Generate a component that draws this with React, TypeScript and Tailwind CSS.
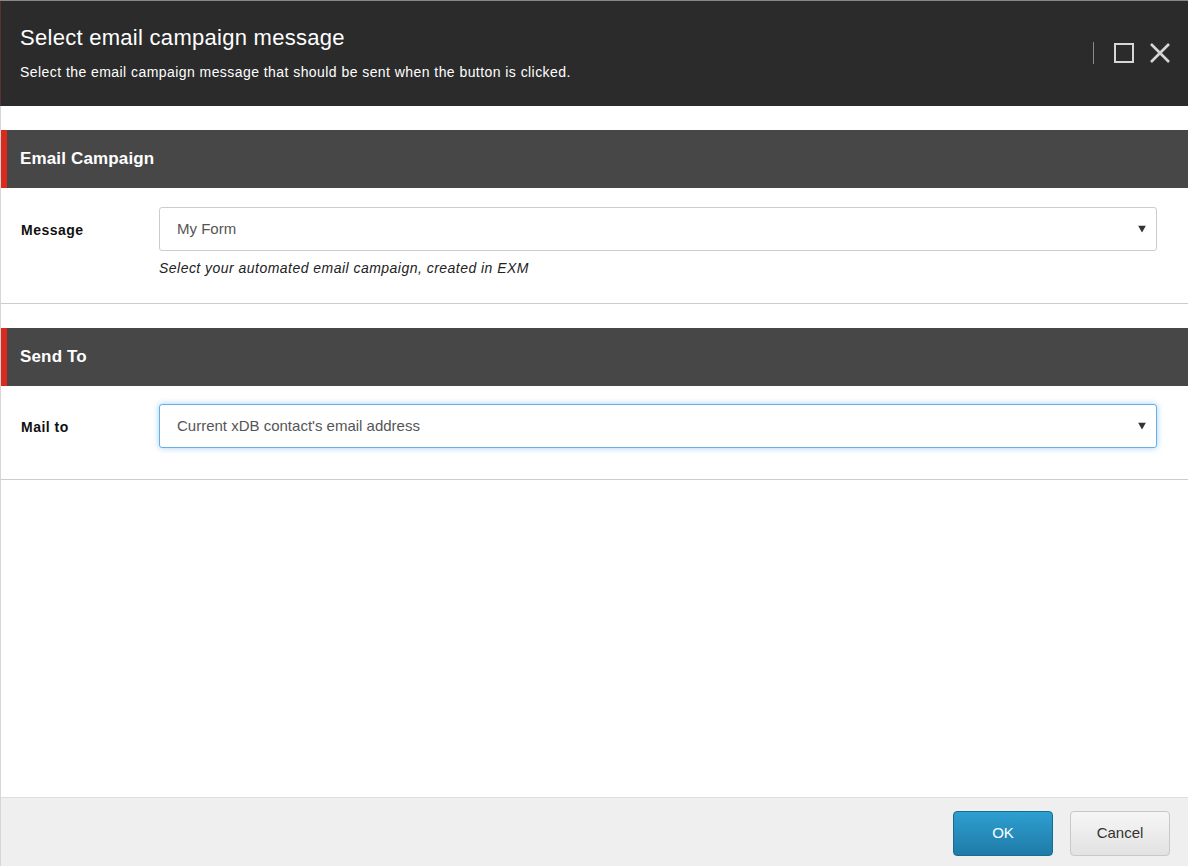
import React from "react";

function Caret() {
  return (
    <svg width="8" height="7" viewBox="0 0 8 7" className="absolute right-[10px] top-1/2 -translate-y-1/2">
      <path d="M0 0 H8 L4 7 Z" fill="#333" />
    </svg>
  );
}

function Section({
  title,
  label,
  value,
  help,
  focused,
}: {
  title: string;
  label: string;
  value: string;
  help?: string;
  focused?: boolean;
}) {
  return (
    <div className="mt-[24px]">
      <div className="h-[58px] bg-[#474747] flex items-center border-l-[6px] border-[#dc291e] pl-[13px]">
        <span className="text-white font-bold text-[17px] tracking-[0.15px]">{title}</span>
      </div>
      <div className={`border-b border-[#cccccc] ${help ? "pt-[19px] pb-[26px]" : "pt-[18px] pb-[31px]"}`}>
        <div className="flex items-center">
          <div className="w-[158px] pl-[20px] pt-[2px] text-[14px] font-bold text-[#111] tracking-[0.5px]">{label}</div>
          <div
            className={`relative flex-1 mr-[31px] h-[44px] rounded-[3px] border bg-white flex items-center pl-[17px] text-[15px] text-[#555] ${
              focused
                ? "border-[#66afe9] shadow-[0_0_6px_rgba(102,175,233,0.6)]"
                : "border-[#cccccc]"
            }`}
          >
            {value}
            <Caret />
          </div>
        </div>
        {help && (
          <div className="pl-[158px] mt-[8px] text-[14px] italic text-[#222] leading-[18px] tracking-[0.47px]">
            {help}
          </div>
        )}
      </div>
    </div>
  );
}

export default function App() {
  return (
    <div
      className="w-[1188px] h-[866px] flex flex-col bg-white border-t border-[#888] overflow-hidden"
      style={{ fontFamily: '"Liberation Sans", Arial, sans-serif' }}
    >
      <div className="h-[105px] bg-[#2b2b2b] flex items-start justify-between border-l border-[#5a3030]">
        <div className="pl-[19px] pt-[23px]">
          <div className="text-[22px] leading-[28px] text-white tracking-[0.28px]">Select email campaign message</div>
          <div className="text-[14px] leading-[16px] text-white mt-[12px] tracking-[0.44px]">
            Select the email campaign message that should be sent when the button is clicked.
          </div>
        </div>
        <div className="flex items-center pt-[41px] pr-[17px]">
          <div className="w-px h-[22px] bg-[#8a8a8a] mr-[20px]" />
          <div className="w-[20px] h-[20px] border-[2px] border-[#d6d6d6] mr-[15px]" />
          <svg width="22" height="22" viewBox="0 0 22 22">
            <path d="M2 2 L20 20 M20 2 L2 20" stroke="#d6d6d6" strokeWidth="2.6" />
          </svg>
        </div>
      </div>
      <div className="flex-1 flex flex-col border-l border-[#d6d6d6]">
        <div className="flex-1">
          <Section
            title="Email Campaign"
            label="Message"
            value="My Form"
            help="Select your automated email campaign, created in EXM"
          />
          <Section title="Send To" label="Mail to" value="Current xDB contact's email address" focused />
        </div>
        <div className="h-[69px] bg-[#efefef] border-t border-[#dedede] flex items-center justify-end gap-[17px] pr-[18px] pt-[2px]">
          <button className="w-[100px] h-[45px] rounded-[4px] border border-[#1b6a8f] bg-gradient-to-b from-[#2d9fd0] to-[#1f7ba8] text-white text-[15px]">
            OK
          </button>
          <button className="w-[100px] h-[45px] rounded-[4px] border border-[#c8c8c8] bg-gradient-to-b from-[#f6f6f6] to-[#e2e2e2] text-[#333] text-[15px]">
            Cancel
          </button>
        </div>
      </div>
    </div>
  );
}
